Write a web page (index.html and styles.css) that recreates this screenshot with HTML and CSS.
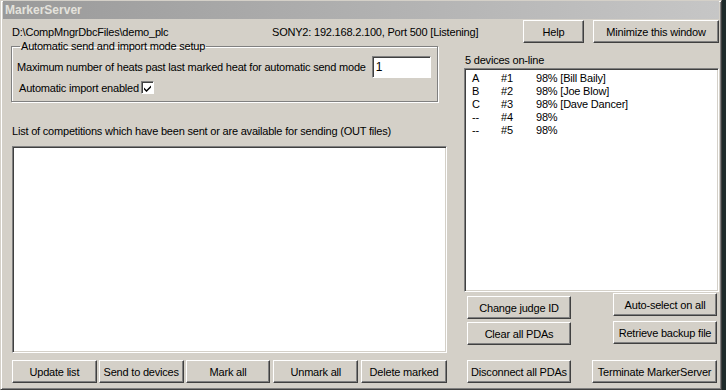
FILE: index.html
```html
<!DOCTYPE html>
<html lang="en">
  <head>
    <meta charset="UTF-8" />
    <title>MarkerServer</title>
    <link rel="stylesheet" href="styles.css">
  </head>
  <body>
    <div class="window">
      <div class="titlebar">MarkerServer</div>

      <div class="top-row">
        <span class="path">D:\CompMngrDbcFiles\demo_plc</span>
        <span class="status">SONY2: 192.168.2.100, Port 500 [Listening]</span>
        <button class="btn btn-help">Help</button>
        <button class="btn btn-min">Minimize this window</button>
      </div>

      <div class="main">
        <div class="left-col">
          <fieldset class="group">
            <legend>Automatic send and import mode setup</legend>
            <div class="group-row heats-row">
              <span>Maximum number of heats past last marked heat for automatic send mode</span>
              <span class="field">1</span>
            </div>
            <div class="group-row check-row">
              <span>Automatic import enabled</span>
              <span class="checkbox">
                <svg width="9" height="9" viewBox="0 0 9 9"><path d="M1 3.5 L3.5 6 L8 1.5 L8 3.5 L3.5 8 L1 5.5 Z" fill="#000"/></svg>
              </span>
            </div>
          </fieldset>

          <div class="label list-label">List of competitions which have been sent or are available for sending (OUT files)</div>
          <div class="listbox out-list"></div>

          <div class="bottom-buttons">
            <button class="btn">Update list</button>
            <button class="btn">Send to devices</button>
            <button class="btn">Mark all</button>
            <button class="btn">Unmark all</button>
            <button class="btn">Delete marked</button>
          </div>
        </div>

        <div class="right-col">
          <div class="label devices-label">5 devices on-line</div>
          <div class="listbox device-list">
            <div class="dev"><span>A</span><span>#1</span><span>98% [Bill Baily]</span></div>
            <div class="dev"><span>B</span><span>#2</span><span>98% [Joe Blow]</span></div>
            <div class="dev"><span>C</span><span>#3</span><span>98% [Dave Dancer]</span></div>
            <div class="dev"><span>--</span><span>#4</span><span>98%</span></div>
            <div class="dev"><span>--</span><span>#5</span><span>98%</span></div>
          </div>

          <div class="device-buttons">
            <div class="dev-col dev-col-left">
              <button class="btn btn-dev">Change judge ID</button>
              <button class="btn btn-dev btn-clear">Clear all PDAs</button>
              <button class="btn btn-dev btn-disc">Disconnect all PDAs</button>
            </div>
            <div class="dev-col dev-col-right">
              <button class="btn btn-dev">Auto-select on all</button>
              <button class="btn btn-dev btn-retrieve">Retrieve backup file</button>
              <button class="btn btn-term">Terminate MarkerServer</button>
            </div>
          </div>
        </div>
      </div>
    </div>
  </body>
</html>
```

FILE: styles.css
```css
body {
  margin: 0;
  background: #1e2a2a;
  font-family: "Liberation Sans", Arial, sans-serif;
  font-size: 11px;
  letter-spacing: -0.2px;
  color: #000;
}

.window {
  width: 722px;
  height: 390px;
  box-sizing: border-box;
  background: #d4d0c8;
  border-top: 1px solid #d4d0c8;
  border-left: 1px solid #d4d0c8;
  border-right: 1px solid #404040;
  border-bottom: 1px solid #404040;
  box-shadow: inset 1px 1px #fff, inset -1px -1px #808080;
  padding: 0 2px 0 2px;
  overflow: hidden;
}

.titlebar {
  height: 18px;
  line-height: 18px;
  padding-left: 2px;
  background: linear-gradient(to right, #9a9a9a, #c6c6c6);
  color: #e4e2dc;
  font-weight: bold;
  font-size: 12px;
  letter-spacing: 0;
}

.top-row {
  display: flex;
  align-items: center;
  height: 23px;
  margin-top: 1px;
}

.path {
  width: 260px;
  padding-left: 9px;
}

.status {
  width: 251px;
}

.btn {
  font-family: "Liberation Sans", Arial, sans-serif;
  font-size: 11px;
  letter-spacing: -0.2px;
  color: #000;
  background: #d4d0c8;
  height: 23px;
  padding: 0;
  border-top: 1px solid #fff;
  border-left: 1px solid #fff;
  border-right: 1px solid #404040;
  border-bottom: 1px solid #404040;
  box-shadow: inset -1px -1px #808080;
  box-sizing: border-box;
}

.btn-help {
  width: 61px;
}

.btn-min {
  width: 126px;
  margin-left: 9px;
}

.main {
  display: flex;
  gap: 17px;
  padding-left: 8px;
}

.left-col {
  width: 436px;
}

.group {
  width: 427px;
  height: 61px;
  box-sizing: border-box;
  margin: -2px 0 0 0;
  padding: 0 0 0 5px;
  border: 1px solid #808080;
  box-shadow: 1px 1px #fff, inset 1px 1px #fff;
}

.group legend {
  padding: 0 1px;
  margin-left: 3px;
  line-height: 10px;
}

.group-row {
  display: flex;
  align-items: center;
  gap: 6px;
  white-space: nowrap;
}

.heats-row {
  margin-top: 5px;
}

.field {
  width: 59px;
  height: 22px;
  box-sizing: border-box;
  background: #fff;
  padding: 3px 0 0 3px;
  border-top: 1px solid #808080;
  border-left: 1px solid #808080;
  border-right: 1px solid #fff;
  border-bottom: 1px solid #fff;
  box-shadow: inset 1px 1px #404040;
  font-size: 12px;
}

.check-row {
  padding-left: 2px;
  gap: 2px;
  margin-top: 3px;
}

.checkbox {
  width: 13px;
  height: 13px;
  box-sizing: border-box;
  background: #fff;
  border-top: 1px solid #808080;
  border-left: 1px solid #808080;
  border-right: 1px solid #fff;
  border-bottom: 1px solid #fff;
  box-shadow: inset 1px 1px #404040;
  display: flex;
  align-items: center;
  justify-content: center;
  padding: 1px 0 0 1px;
}

.label {
  line-height: 14px;
  padding-left: 1px;
}

.list-label {
  margin-top: 22px;
}

.listbox {
  background: #fff;
  box-sizing: border-box;
  border-top: 1px solid #808080;
  border-left: 1px solid #808080;
  border-right: 1px solid #fff;
  border-bottom: 1px solid #fff;
  box-shadow: inset 1px 1px #404040, inset -1px -1px #d4d0c8;
}

.out-list {
  width: 435px;
  height: 207px;
  margin: 8px 0 0 1px;
}

.bottom-buttons {
  display: flex;
  gap: 2px;
  margin: 7px 0 0 1px;
}

.bottom-buttons .btn {
  width: 85px;
}

.bottom-buttons .btn:nth-child(4) {
  margin-left: 1px;
}

.bottom-buttons .btn:nth-child(5) {
  margin-left: 1px;
  width: 86px;
}

.right-col {
  width: 256px;
}

.devices-label {
  margin-top: 10px;
}

.device-list {
  height: 224px;
  margin-top: 1px;
  padding: 3px 0 0 5px;
}

.dev {
  display: grid;
  grid-template-columns: 31px 35px auto;
  line-height: 13px;
}

.dev span:first-child {
  padding-left: 2px;
}

.device-buttons {
  display: flex;
  justify-content: space-between;
  padding: 0 2px 0 3px;
}

.dev-col {
  display: flex;
  flex-direction: column;
}

.dev-col-left {
  margin-top: 4px;
}

.dev-col-right {
  align-items: flex-end;
  margin-top: 1px;
}

.btn-dev {
  width: 104px;
}

.btn-clear {
  margin-top: 3px;
}

.btn-disc {
  margin-top: 15px;
}

.btn-retrieve {
  margin-top: 5px;
}

.btn-term {
  width: 125px;
  margin-top: 16px;
}
```
